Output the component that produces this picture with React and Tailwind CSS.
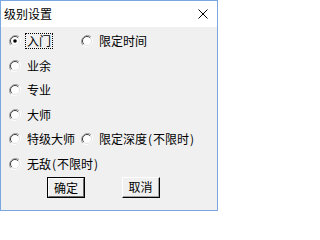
import React from "react";

const font = { fontFamily: '"Noto Sans CJK SC", "DejaVu Sans", sans-serif' };

function Radio({ checked }) {
  return (
    <svg width="12" height="12" viewBox="0 0 12 12" className="shrink-0">
      <path d="M10.2 1.8 A6 6 0 0 0 1.8 10.2" fill="none" stroke="#a0a0a0" strokeWidth="1" />
      <path d="M1.8 10.2 A6 6 0 0 0 10.2 1.8" fill="none" stroke="#ffffff" strokeWidth="1" />
      <circle cx="6" cy="6" r="4.5" fill="#ffffff" />
      <path d="M9.2 2.8 A4.5 4.5 0 0 0 2.8 9.2" fill="none" stroke="#404040" strokeWidth="1" />
      <path d="M2.8 9.2 A4.5 4.5 0 0 0 9.2 2.8" fill="none" stroke="#e3e3e3" strokeWidth="1" />
      {checked && <circle cx="6" cy="6" r="1.8" fill="#000000" />}
    </svg>
  );
}

// half-width paren padded to SimSun's 6px advance
function P({ children }) {
  return <span className="inline-block w-[6px] text-center">{children}</span>;
}

function Option({ label, checked, focused, className = "" }) {
  return (
    <div className={"flex items-center " + className}>
      <Radio checked={checked} />
      <span
        className={
          "ml-[4px] leading-[14px] text-[12px] text-black px-[1px] border border-dotted " +
          (focused ? "border-black" : "border-transparent")
        }
      >
        {label}
      </span>
    </div>
  );
}

export default function App() {
  return (
    <div
      className="w-[218px] h-[211px] bg-[#f0f0f0] border border-[#7aa7e0] flex flex-col overflow-hidden"
      style={font}
    >
      <div className="h-[26px] bg-white flex items-center justify-between shrink-0">
        <span className="ml-[3px] text-[12px] text-black leading-none">级别设置</span>
        <svg width="10" height="10" viewBox="0 0 10 10" className="mr-[9px]">
          <path d="M0.5 0.5 L9.5 9.5 M9.5 0.5 L0.5 9.5" stroke="#000" strokeWidth="1" />
        </svg>
      </div>

      <div className="flex flex-col pt-[2px]">
        <div className="h-[24.5px] flex items-center">
          <Option label="入门" checked focused className="ml-[8px] w-[72px]" />
          <Option label="限定时间" />
        </div>
        <div className="h-[24.5px] flex items-center">
          <Option label="业余" className="ml-[8px]" />
        </div>
        <div className="h-[24.5px] flex items-center">
          <Option label="专业" className="ml-[8px]" />
        </div>
        <div className="h-[24.5px] flex items-center">
          <Option label="大师" className="ml-[8px]" />
        </div>
        <div className="h-[24.5px] flex items-center">
          <Option label="特级大师" className="ml-[8px] w-[72px]" />
          <Option label={<>限定深度<P>(</P>不限时<P>)</P></>} />
        </div>
        <div className="h-[24.5px] flex items-center">
          <Option label={<>无敌<P>(</P>不限时<P>)</P></>} className="ml-[8px]" />
        </div>
      </div>

      <div className="flex mt-[1px] ml-[46px] gap-[37px]">
        <button className="w-[38px] h-[21px] border border-black bg-[#f0f0f0] text-[12px] text-black flex items-center justify-center p-0">
          <span className="w-full h-full flex items-center justify-center border-t border-l border-t-white border-l-white border-r border-b border-r-[#696969] border-b-[#696969]">
            确定
          </span>
        </button>
        <button className="w-[38px] h-[21px] bg-[#f0f0f0] text-[12px] text-black flex items-center justify-center p-0 border border-t-white border-l-white border-r-black border-b-black">
          <span className="w-full h-full flex items-center justify-center border-r border-b border-r-[#a0a0a0] border-b-[#a0a0a0]">
            取消
          </span>
        </button>
      </div>
    </div>
  );
}
